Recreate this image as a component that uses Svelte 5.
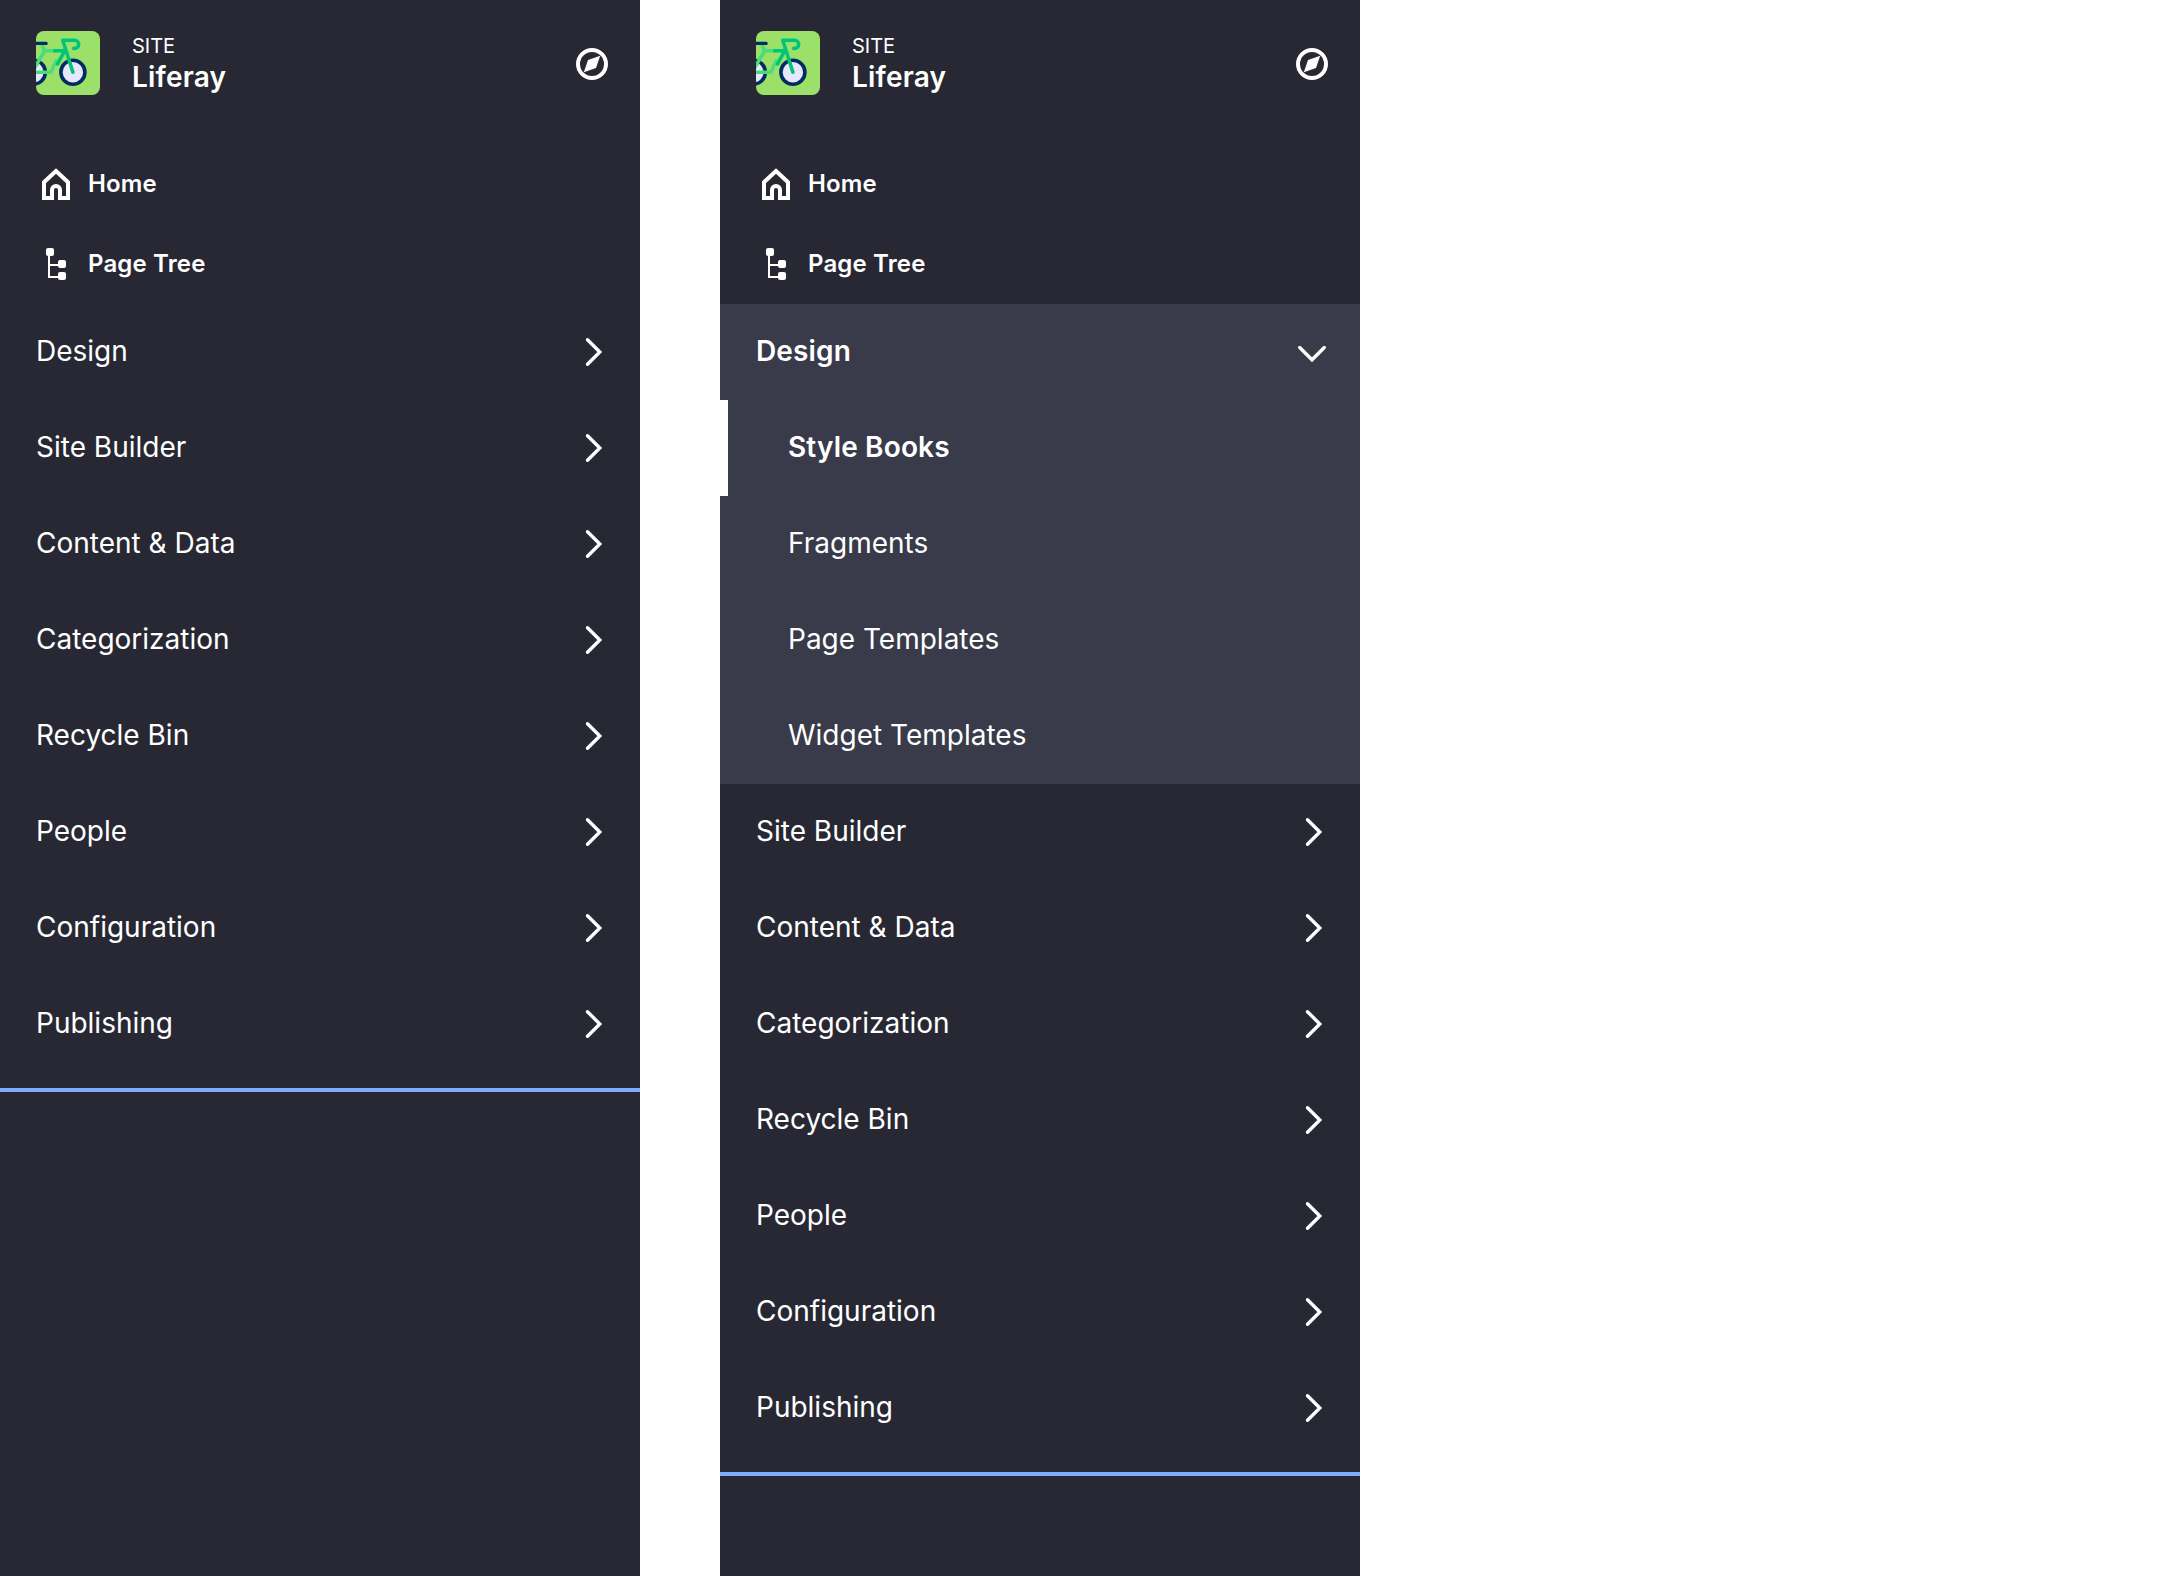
<script>
  const sections = [
    'Design',
    'Site Builder',
    'Content & Data',
    'Categorization',
    'Recycle Bin',
    'People',
    'Configuration',
    'Publishing',
  ];
  const designPages = ['Style Books', 'Fragments', 'Page Templates', 'Widget Templates'];
  const panels = [
    { open: null, active: null },
    { open: 'Design', active: 'Style Books' },
  ];
</script>

<main>
  {#each panels as panel}
    <aside>
      <header>
        <svg class="logo" viewBox="0 0 64 64" fill="none" stroke-linecap="round" stroke-linejoin="round">
          <rect width="64" height="64" fill="#9be169" />
          <g fill="#e7e7fc" stroke="#002c62" stroke-width="3.6">
            <circle cx="-2.7" cy="41.2" r="12" />
            <circle cx="36.9" cy="41.2" r="12" />
          </g>
          <g stroke="#4bdc7a" stroke-width="3.6">
            <path d="M6 13.5L8.6 20L-4 41.3H15L20 30" />
            <path d="M8.6 19.8H19" />
          </g>
          <path
            d="M18.5 19.8H28.6L21.5 33M36.9 41.2L26.8 9.2H38.6A4.1 4.1 0 0 1 38.6 17.4H37.8"
            stroke="#00c47a"
            stroke-width="3.6"
          />
          <path d="M-4 12.4H10.2" stroke="#002c62" stroke-width="3.2" />
        </svg>
        <div class="site">
          <span class="kind">SITE</span>
          <span class="name">Liferay</span>
        </div>
        <svg class="compass" viewBox="0 0 32 32">
          <circle cx="16" cy="16" r="14" fill="none" stroke="#fff" stroke-width="4" />
          <path d="M24.2 7.8L20 20L7.8 24.2L12 12Z" fill="#fff" />
        </svg>
      </header>

      <nav>
        <div class="shortcut">
          <svg viewBox="0 0 32 32" fill="none" stroke="#fff" stroke-width="4">
            <path d="M4 30V14.2L16 3L28 14.2V30H20V22A4 4 0 0 0 12 22V30Z" />
          </svg>
          <span>Home</span>
        </div>
        <div class="shortcut">
          <svg viewBox="0 0 32 32" fill="#fff">
            <path d="M9 6V29H20M9 17H20" fill="none" stroke="#fff" stroke-width="2" />
            <rect x="6" y="0" width="8" height="8" rx="2" />
            <rect x="18" y="12" width="8" height="8" rx="2" />
            <rect x="18" y="24" width="8" height="8" rx="2" />
          </svg>
          <span>Page Tree</span>
        </div>

        {#each sections as section}
          {@const open = section === panel.open}
          <div class="row" class:open>
            <span>{section}</span>
            <svg viewBox="0 0 32 32" fill="none" stroke="#fff" stroke-width="3.4" stroke-linecap="round">
              {#if open}
                <path d="M3.7 11.5L16 23.8L28.3 11.5" />
              {:else}
                <path d="M11.5 3.7L23.8 16L11.5 28.3" />
              {/if}
            </svg>
          </div>
          {#if open}
            {#each designPages as page}
              <div class="row sub" class:active={page === panel.active}>
                <span>{page}</span>
              </div>
            {/each}
          {/if}
        {/each}
      </nav>
    </aside>
  {/each}
</main>

<style>
  :global(body) {
    margin: 0;
    background: #fff;
  }

  main {
    display: flex;
    gap: 80px;
    height: 1576px;
    font-family: Inter, 'Liberation Sans', sans-serif;
    color: #fff;
  }

  aside {
    width: 640px;
    background: #272833;
  }

  header {
    display: flex;
    align-items: center;
    box-sizing: border-box;
    height: 144px;
    padding: 0 32px 18px 36px;
  }

  .logo {
    width: 64px;
    height: 64px;
    margin-right: 32px;
    border-radius: 8px;
  }

  .site {
    display: flex;
    flex: 1;
    flex-direction: column;
    padding-bottom: 2px;
  }

  .kind {
    font-size: 20px;
    line-height: 30px;
  }

  .name {
    font-size: 28px;
    font-weight: 600;
    line-height: 32px;
    letter-spacing: 0.2px;
  }

  .compass {
    width: 32px;
    height: 32px;
    margin-top: 2px;
  }

  nav {
    padding-bottom: 16px;
    border-bottom: 4px solid #80acff;
  }

  .shortcut {
    display: flex;
    align-items: center;
    gap: 16px;
    height: 80px;
    padding-left: 40px;
    font-size: 24px;
    font-weight: 600;
    letter-spacing: 0.15px;
  }

  .shortcut span,
  .row span {
    padding-bottom: 2px;
  }

  .shortcut svg {
    width: 32px;
    height: 32px;
  }

  .row {
    display: flex;
    align-items: center;
    justify-content: space-between;
    box-sizing: border-box;
    height: 96px;
    padding: 0 32px 0 36px;
    font-size: 28px;
  }

  .row svg {
    width: 32px;
    height: 32px;
  }

  .open,
  .sub {
    background: #393a4a;
  }

  .open,
  .active {
    font-weight: 600;
    letter-spacing: 0.15px;
  }

  .sub {
    padding-left: 60px;
    border-left: 8px solid #393a4a;
  }

  .active {
    border-left-color: #fff;
  }
</style>
